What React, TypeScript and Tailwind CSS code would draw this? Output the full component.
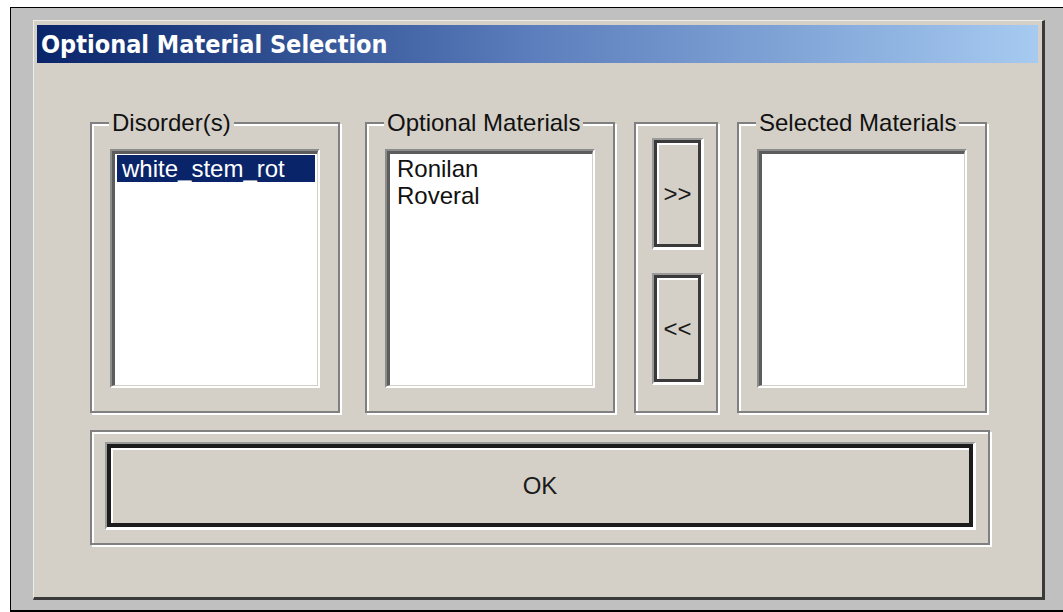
import type { ReactNode } from 'react';

const sans = "font-['Liberation_Sans',Arial,sans-serif]";

function GroupBox({
  label,
  className,
  children,
}: {
  label?: string;
  className?: string;
  children: ReactNode;
}) {
  return (
    <div
      className={`relative border-2 border-[#808080] shadow-[inset_2px_2px_0_#fff,2px_2px_0_#fff] ${className ?? ''}`}
    >
      {label && (
        <span className="absolute left-[17px] top-[-15px] bg-[#d4d0c8] px-[3px] text-[24px] leading-[27px] text-[#111] whitespace-nowrap">
          {label}
        </span>
      )}
      {children}
    </div>
  );
}

function ListBox({ items, selected }: { items: string[]; selected?: number }) {
  return (
    <div className="flex-1 flex border-t-2 border-l-2 border-[#8c8c8c] border-b-2 border-r-2 border-b-white border-r-white">
      <div className="flex-1 bg-white border-t-[3px] border-l-[3px] border-[#5c5c5c] border-b border-r border-b-[#d4d0c8] border-r-[#d4d0c8] pt-[1px] px-[2px]">
        {items.map((item, i) => (
          <div
            key={item}
            className={`h-[27px] pl-[5px] text-[24px] leading-[27px] whitespace-nowrap ${
              i === selected ? 'bg-[#0a246a] text-white' : 'text-[#111]'
            }`}
          >
            {item}
          </div>
        ))}
      </div>
    </div>
  );
}

function PushButton({
  children,
  className,
  thick,
}: {
  children: ReactNode;
  className?: string;
  thick?: boolean;
}) {
  return (
    <div
      className={`flex border-t-2 border-l-2 border-[#9a9a9a] border-b-[3px] border-r-[3px] border-b-white border-r-white ${className ?? ''}`}
    >
      <button
        className={`flex-1 flex items-center justify-center bg-[#d4d0c8] shadow-[inset_2px_2px_0_#fff] text-[24px] text-[#1a1a1a] ${
          thick ? 'border-4 border-[#1c1c1c]' : 'border-[3px] border-[#3a3a3a]'
        }`}
      >
        {children}
      </button>
    </div>
  );
}

export default function App() {
  return (
    <div className={`w-[1063px] h-[612px] bg-white pt-[7px] pl-[10px] overflow-hidden ${sans}`}>
      <div className="bg-[#c0c0c0] border-t border-l border-b-2 border-black pt-[12px] pl-[22px] pb-[10px]">
        {/* dialog window */}
        <div className="w-[1012px] h-[580px] bg-[#d4d0c8] border-t border-l border-[#efede8] border-r-[3px] border-b-[3px] border-r-[#3a3a3a] border-b-[#3a3a3a] pt-[4px] pl-[3px] pr-[4px] flex flex-col">
          <div className="h-[38px] flex items-center pl-[4px] bg-gradient-to-r from-[#0a246a] via-[#5d7fbd] to-[#a6caf0]">
            <span className="font-['DejaVu_Sans_Condensed','DejaVu_Sans',sans-serif] font-bold text-[25px] leading-none text-white whitespace-nowrap">
              Optional Material Selection
            </span>
          </div>

          <div className="flex flex-col pt-[59px] pl-[53px]">
            <div className="flex h-[291px]">
              <GroupBox label="Disorder(s)" className="w-[250px] flex flex-col pt-[25px] pb-[23px] px-[18px]">
                <ListBox items={['white_stem_rot']} selected={0} />
              </GroupBox>

              <GroupBox label="Optional Materials" className="w-[250px] ml-[25px] flex flex-col pt-[25px] pb-[23px] px-[18px]">
                <ListBox items={['Ronilan', 'Roveral']} />
              </GroupBox>

              <GroupBox className="w-[84px] ml-[19px] flex flex-col gap-[23px] pt-[14px] pl-[16px]">
                <PushButton className="w-[52px] h-[112px]">&gt;&gt;</PushButton>
                <PushButton className="w-[52px] h-[112px]">&lt;&lt;</PushButton>
              </GroupBox>

              <GroupBox label="Selected Materials" className="w-[250px] ml-[19px] flex flex-col pt-[25px] pb-[23px] px-[18px]">
                <ListBox items={[]} />
              </GroupBox>
            </div>

            <GroupBox className="w-[900px] h-[115px] mt-[17px] flex pt-[10px] pl-[13px] pr-[12px] pb-[13px]">
              <PushButton thick className="flex-1">
                OK
              </PushButton>
            </GroupBox>
          </div>
        </div>
      </div>
    </div>
  );
}
